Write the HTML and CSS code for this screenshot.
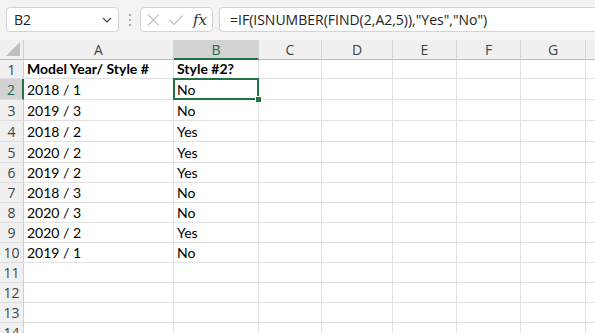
FILE: index.html
```html
<!DOCTYPE html>
<html lang="en">
<head>
    <meta charset="UTF-8">
    <title>Book1 - Excel</title>
    <link rel="stylesheet" href="styles.css">
</head>
<body>
    <div class="formula-bar">
        <div class="name-box">
            <span>B2</span>
            <svg class="chevron" width="10" height="6" viewBox="0 0 10 6"><path d="M1 1 L5 5 L9 1" fill="none" stroke="#444" stroke-width="1.2"/></svg>
        </div>
        <svg class="grip" width="4" height="14" viewBox="0 0 4 14"><circle cx="2" cy="2" r="1.1" fill="#9a9a9a"/><circle cx="2" cy="7" r="1.1" fill="#9a9a9a"/><circle cx="2" cy="12" r="1.1" fill="#9a9a9a"/></svg>
        <div class="fx-box">
            <svg width="14" height="14" viewBox="0 0 14 14"><path d="M1 1 L13 13 M13 1 L1 13" stroke="#bdbdbd" stroke-width="1.3"/></svg>
            <svg width="16" height="12" viewBox="0 0 16 12"><path d="M1 6 L5.5 11 L15 1" fill="none" stroke="#bdbdbd" stroke-width="1.3"/></svg>
            <span class="fx">fx</span>
        </div>
        <div class="formula-box">=IF(ISNUMBER(FIND(2,A2,5)),"Yes","No")</div>
    </div>

    <div class="sheet" id="sheet">
        <div class="corner">
            <svg width="14" height="14" viewBox="0 0 14 14"><polygon points="14,0 14,14 0,14" fill="#bfbfbf"/></svg>
        </div>
        <div class="col-head">A</div>
        <div class="col-head selected">B</div>
        <div class="col-head">C</div>
        <div class="col-head">D</div>
        <div class="col-head">E</div>
        <div class="col-head">F</div>
        <div class="col-head">G</div>
        <div class="col-head"></div>
    </div>

    <script>
        const rows = [
            ['Model Year/ Style #', 'Style #2?'],
            ['2018 / 1', 'No'],
            ['2019 / 3', 'No'],
            ['2018 / 2', 'Yes'],
            ['2020 / 2', 'Yes'],
            ['2019 / 2', 'Yes'],
            ['2018 / 3', 'No'],
            ['2020 / 3', 'No'],
            ['2020 / 2', 'Yes'],
            ['2019 / 1', 'No'],
            ['', ''],
            ['', ''],
            ['', ''],
            ['', '']
        ];

        const sheet = document.getElementById('sheet');
        rows.forEach((row, i) => {
            const n = i + 1;
            const head = document.createElement('div');
            head.className = 'row-head' + (n === 2 ? ' selected' : '');
            head.textContent = n;
            sheet.appendChild(head);
            for (let c = 0; c < 8; c++) {
                const cell = document.createElement('div');
                cell.className = 'cell';
                if (n === 1) cell.classList.add('bold');
                if (c < 2) cell.textContent = row[c];
                if (n === 2 && c === 1) {
                    cell.classList.add('active');
                    const handle = document.createElement('span');
                    handle.className = 'fill-handle';
                    cell.appendChild(handle);
                }
                sheet.appendChild(cell);
            }
        });
    </script>
</body>
</html>
```

FILE: styles.css
```css
body {
    margin: 0;
    font-family: Lato, "Liberation Sans", sans-serif;
    background-color: #ffffff;
    overflow: hidden;
}
.formula-bar {
    height: 40px;
    box-sizing: border-box;
    background-color: #f3f3f3;
    display: flex;
    align-items: flex-start;
    padding: 7px 0 0 6px;
    font-family: "Open Sans", "Noto Sans", sans-serif;
    font-size: 14px;
    color: #222;
}
.name-box {
    width: 113px;
    height: 25px;
    box-sizing: border-box;
    background-color: #fff;
    border: 1px solid #d4d4d4;
    border-radius: 4px;
    display: flex;
    align-items: center;
    justify-content: space-between;
    padding: 0 6px 0 7px;
}
.grip {
    margin: 6px 0 0 9px;
}
.fx-box {
    width: 73px;
    height: 25px;
    box-sizing: border-box;
    margin-left: 8px;
    background-color: #fff;
    border: 1px solid #d4d4d4;
    border-radius: 4px;
    display: flex;
    align-items: center;
    gap: 9px;
    padding: 0 5px 0 6px;
}
.fx {
    font-family: "DejaVu Serif", "Liberation Serif", serif;
    font-style: italic;
    font-size: 15px;
    color: #333;
    margin-left: 1px;
}
.formula-box {
    flex: 1;
    height: 25px;
    box-sizing: border-box;
    margin-left: 6px;
    background-color: #fff;
    border: 1px solid #d4d4d4;
    border-right: none;
    border-radius: 4px 0 0 4px;
    padding: 1px 0 0 10px;
    line-height: 21px;
}
.sheet {
    display: grid;
    grid-template-columns: 24px 150px 85px 63px 71px 64px 64px 65px 20px;
    grid-template-rows: 20px 19px repeat(4, 21px) repeat(9, 20px);
}
.corner,
.col-head,
.row-head {
    background-color: #f0f0f0;
    color: #444;
    font-family: "Open Sans", "Noto Sans", sans-serif;
    font-size: 14px;
    box-sizing: border-box;
}
.corner {
    border-right: 1px solid #cfcfcf;
    border-bottom: 1px solid #bdbdbd;
    display: flex;
    align-items: flex-end;
    justify-content: flex-end;
    padding: 0 3px 3px 0;
}
.col-head {
    display: flex;
    align-items: center;
    justify-content: center;
    border-right: 1px solid #d6d6d6;
    border-bottom: 1px solid #bdbdbd;
}
.col-head.selected {
    background-color: #d2d2d2;
    color: #1e6b41;
    border-bottom: 2px solid #217346;
}
.row-head {
    display: flex;
    align-items: center;
    justify-content: center;
    border-right: 1px solid #cfcfcf;
    border-bottom: 1px solid #dedede;
}
.row-head.selected {
    background-color: #d2d2d2;
    color: #1e6b41;
    border-right: 2px solid #217346;
}
.cell {
    position: relative;
    box-sizing: border-box;
    border-right: 1px solid #e1e1e1;
    border-bottom: 1px solid #e1e1e1;
    padding: 0 3px 1px;
    font-size: 14px;
    color: #000;
    display: flex;
    align-items: flex-end;
    white-space: nowrap;
}
.cell.bold {
    font-weight: bold;
}
.cell.active::after {
    content: "";
    position: absolute;
    top: -1px;
    left: -1px;
    right: -1px;
    bottom: -1px;
    border: 2px solid #217346;
}
.fill-handle {
    position: absolute;
    right: -4px;
    bottom: -4px;
    width: 5px;
    height: 5px;
    background-color: #217346;
    border: 1px solid #fff;
    z-index: 1;
}
```
